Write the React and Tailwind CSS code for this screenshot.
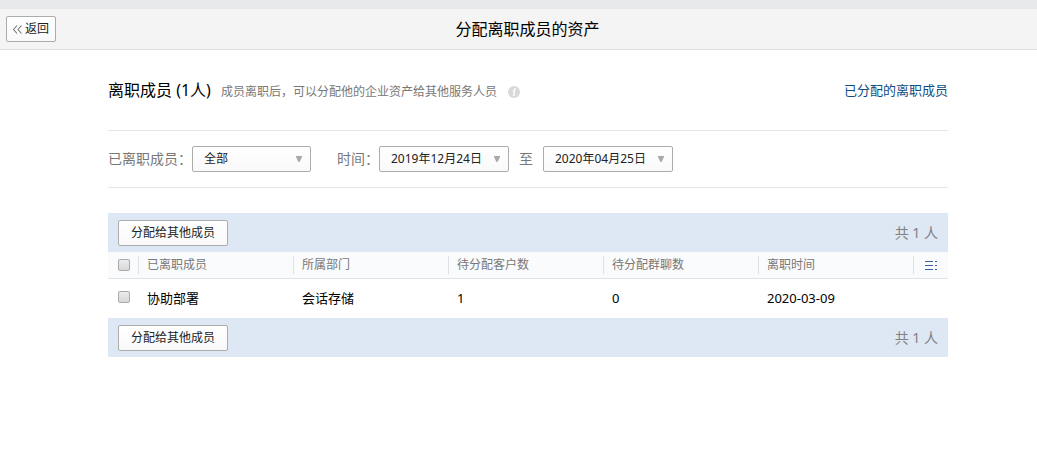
import { useState } from 'react';

const members = [
  { id: 1, name: '协助部署', department: '会话存储', customers: 1, groups: 0, leftAt: '2020-03-09' },
];

const columns = ['已离职成员', '所属部门', '待分配客户数', '待分配群聊数', '离职时间'];

const checkboxClass =
  'block h-3 w-3 appearance-none rounded-[2px] border border-[#a9a9a9] bg-linear-to-b from-[#ececec] to-[#d8d8d8] checked:bg-[#2a62a4]';

function Button({ children }) {
  return (
    <button
      type="button"
      className="h-[26px] rounded-[2px] border border-[#acacac] bg-linear-to-b from-white to-[#f9f9f9] px-3 text-xs text-[#222] hover:to-[#f0f0f0]"
    >
      {children}
    </button>
  );
}

function Dropdown({ id, label, value, width }) {
  return (
    <span className={`relative block ${width}`}>
      <select
        id={id}
        aria-label={label}
        defaultValue={value}
        className="block h-[26px] w-full appearance-none rounded-[2px] border border-[#acacac] bg-linear-to-b from-white to-[#f9f9f9] pr-6 pl-[11px] text-xs text-[#222]"
      >
        <option>{value}</option>
      </select>
      <svg
        className="pointer-events-none absolute top-[10px] right-2 h-[6px] w-2"
        viewBox="0 0 8 6"
        fill="#aaa"
      >
        <path d="M1 0h6v1L4.6 6H3.4L1 1z" />
      </svg>
    </span>
  );
}

// Action bar above and below the table
function Toolbar() {
  return (
    <div className="flex h-[39px] items-center justify-between bg-[#dee8f4] px-[10px]">
      <Button>分配给其他成员</Button>
      <span className="text-sm text-[#818181]">共 {members.length} 人</span>
    </div>
  );
}

export default function App() {
  const [selected, setSelected] = useState([]);
  const allSelected = selected.length === members.length;

  const toggle = (id) => {
    setSelected(selected.includes(id) ? selected.filter((s) => s !== id) : [...selected, id]);
  };

  return (
    <div className="min-h-screen bg-white font-['Noto_Sans','Noto_Sans_CJK_SC',sans-serif] text-black">
      <div className="h-[9px] bg-[#e8e9eb]" />
      <header className="grid h-[41px] grid-cols-[1fr_auto_1fr] items-center border-b border-[#dedede] bg-[#f4f4f4] pr-[6px] pl-6">
        <button
          type="button"
          className="-ml-[18px] flex h-[26px] w-[50px] items-center justify-center gap-[3px] rounded-[2px] border border-[#acacac] bg-linear-to-b from-white to-[#f9f9f9] text-xs text-[#222]"
        >
          <svg className="h-[9px] w-[9px]" viewBox="0 0 9 9" fill="none" stroke="#777" strokeWidth="1.1">
            <path d="M4 .5l-3.5 4 3.5 4M8.5 .5L5 4.5l3.5 4" />
          </svg>
          返回
        </button>
        <h1 className="text-base leading-6">分配离职成员的资产</h1>
      </header>

      <main className="pr-[89px] pl-[108px]">
        <div className="flex h-[81px] items-center border-b border-[#e4e6e9]">
          <h2 className="text-base leading-6">离职成员 (1人)</h2>
          <p className="ml-[10px] pt-1 text-xs leading-6 text-[#787878]">
            成员离职后，可以分配他的企业资产给其他服务人员
          </p>
          <svg className="mt-1 ml-[11px] h-3 w-3" viewBox="0 0 12 12">
            <circle cx="6" cy="6" r="6" fill="#d9d9d9" />
            <circle cx="6.8" cy="2.9" r="1" fill="#fff" />
            <path d="M4.8 5h1.7L5.6 9h1.2" fill="none" stroke="#fff" strokeWidth="1.3" />
          </svg>
          <a href="#assigned" className="ml-auto text-[13px] leading-6 text-[#0f4c81] hover:underline">
            已分配的离职成员
          </a>
        </div>

        <div className="flex h-[57px] items-center border-b border-[#e4e6e9] text-sm text-[#787878]">
          <label htmlFor="member">已离职成员：</label>
          <Dropdown id="member" value="全部" width="w-[119px]" />
          <label htmlFor="start" className="ml-[26px]">时间：</label>
          <Dropdown id="start" value="2019年12月24日" width="w-[130px]" />
          <span className="mx-[10px]">至</span>
          <Dropdown id="end" label="结束时间" value="2020年04月25日" width="w-[130px]" />
        </div>

        <section className="mt-[25px]">
          <Toolbar />
          <table className="w-full table-fixed border-separate border-spacing-0 text-left">
            <thead>
              <tr className="h-[27px] bg-[#fafbfd] text-xs text-[#787878]">
                <th className="w-[30px] border-b border-[#e1e3e6] p-0 pl-[10px]">
                  <input
                    type="checkbox"
                    aria-label="全选"
                    className={checkboxClass}
                    checked={allSelected}
                    onChange={() => setSelected(allSelected ? [] : members.map((m) => m.id))}
                  />
                </th>
                {columns.map((column) => (
                  <th key={column} className="border-b border-[#e1e3e6] p-0 font-normal">
                    <div className="border-l border-[#dfe1e4] pl-2 leading-[18px]">{column}</div>
                  </th>
                ))}
                <th className="w-[35px] border-b border-[#e1e3e6] p-0">
                  <div className="flex h-[18px] items-center border-l border-[#dfe1e4] pl-[11px]">
                    <button type="button" aria-label="设置列">
                      <svg className="block h-[9px] w-3" viewBox="0 0 12 9" fill="#3c62a0">
                        <path d="M0 0h8v1H0zM0 4h8v1H0zM0 8h8v1H0zM10 0h2v1h-2zM10 4h2v1h-2zM10 8h2v1h-2z" />
                      </svg>
                    </button>
                  </div>
                </th>
              </tr>
            </thead>
            <tbody>
              {members.map((m) => (
                <tr key={m.id} className="h-[39px] text-[13px]">
                  <td className="pb-1 pl-[10px]">
                    <input
                      type="checkbox"
                      aria-label={m.name}
                      className={checkboxClass}
                      checked={selected.includes(m.id)}
                      onChange={() => toggle(m.id)}
                    />
                  </td>
                  <td className="pl-[9px]">{m.name}</td>
                  <td className="pl-[9px]">{m.department}</td>
                  <td className="pl-[9px]">{m.customers}</td>
                  <td className="pl-[9px]">{m.groups}</td>
                  <td className="pl-[9px]">{m.leftAt}</td>
                  <td />
                </tr>
              ))}
            </tbody>
          </table>
          <Toolbar />
        </section>
      </main>
    </div>
  );
}
